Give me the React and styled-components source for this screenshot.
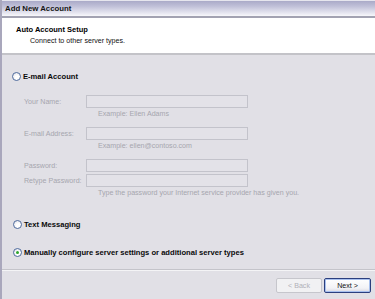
import React from "react";
import styled, { createGlobalStyle } from "styled-components";

const Global = createGlobalStyle`
  html, body { margin: 0; padding: 0; }
  body { width: 375px; height: 299px; overflow: hidden; background: #e1e0e6; }
  * { box-sizing: border-box; }
`;

const Window = styled.div`
  width: 375px;
  height: 299px;
  display: flex;
  flex-direction: column;
  border-left: 2px solid #a9a7bc;
  font-family: "Liberation Sans", Arial, sans-serif;
  font-size: 7.1px;
  color: #000;
  background: #e1e0e6;
`;

const TitleBar = styled.div`
  height: 18px;
  display: flex;
  align-items: center;
  padding: 0 0 1px 3px;
  border-top: 1px solid #e6e6ee;
  border-bottom: 2px solid #a3a3b2;
  background: linear-gradient(to bottom, #aaaac8 0%, #c0c0d8 35%, #efeff6 90%, #f8f8fb 100%);
  font-weight: bold;
  font-size: 7.8px;
  color: #141414;
`;

const Header = styled.div`
  height: 37px;
  background: #ffffff;
  border-bottom: 2px solid #c3c3c8;
  padding: 7px 0 0 14px;
  display: flex;
  flex-direction: column;
`;

const HeaderTitle = styled.div`
  font-weight: bold;
  font-size: 7.5px;
  line-height: 10px;
`;

const HeaderSub = styled.div`
  font-size: 7.1px;
  line-height: 10px;
  margin-top: 1px;
  padding-left: 14px;
  color: #111;
`;

const Body = styled.div`
  flex: 1;
  display: flex;
  flex-direction: column;
  padding-top: 15px;
  border-bottom: 1px solid #c4c4ca;
`;

const OptionRow = styled.label`
  height: 12px;
  display: flex;
  align-items: center;
  gap: 2px;
  padding-left: ${(p) => p.$indent}px;
  margin-top: ${(p) => p.$top}px;
  font-weight: bold;
  font-size: 7.6px;
  color: #0a0a0a;
`;

const Radio = styled.span`
  width: 9px;
  height: 9px;
  border-radius: 50%;
  border: 1px solid #4f6c9e;
  background: radial-gradient(circle at 60% 65%, #ffffff 30%, #dcdce4 100%);
  display: flex;
  align-items: center;
  justify-content: center;
  flex: none;
  &::after {
    content: "";
    display: ${(p) => (p.$checked ? "block" : "none")};
    width: 3px;
    height: 3px;
    border-radius: 50%;
    background: #2da52d;
  }
`;

const FieldRow = styled.div`
  height: 13px;
  display: grid;
  grid-template-columns: 62px 162px;
  align-items: center;
  padding-left: 22px;
  margin-top: ${(p) => p.$top}px;
`;

const FieldLabel = styled.span`
  color: #a6a6ae;
  padding-top: 1px;
`;

const Input = styled.div`
  height: 13px;
  border: 1px solid #c3c3cb;
  background: #e3e2e8;
`;

const Hint = styled.div`
  height: 12px;
  display: flex;
  align-items: center;
  padding-left: 96px;
  color: #a6a6ae;
`;

const Footer = styled.div`
  height: 29px;
  border-top: 1px solid #f4f4f6;
  display: flex;
  justify-content: flex-end;
  align-items: flex-start;
  gap: 2px;
  padding: 7px 4px 0 0;
`;

const Button = styled.button`
  width: ${(p) => p.$w}px;
  height: 15px;
  padding: 0;
  font-family: "Liberation Sans", Arial, sans-serif;
  font-size: 7.1px;
  border-radius: 2px;
  border: 1px solid ${(p) => (p.$primary ? "#2b3f7e" : "#c6c6cc")};
  color: ${(p) => (p.$primary ? "#111" : "#b0b0b8")};
  background: ${(p) =>
    p.$primary
      ? "linear-gradient(to bottom, #ffffff 0%, #f2f2f6 70%, #d8d8e2 100%)"
      : "#f1f1f3"};
  box-shadow: ${(p) => (p.$primary ? "inset 0 0 0 1px #a8c0ee" : "none")};
`;

export default function App() {
  return (
    <>
      <Global />
      <Window>
        <TitleBar>Add New Account</TitleBar>
        <Header>
          <HeaderTitle>Auto Account Setup</HeaderTitle>
          <HeaderSub>Connect to other server types.</HeaderSub>
        </Header>
        <Body>
          <OptionRow $indent={10} $top={0}>
            <Radio />
            E-mail Account
          </OptionRow>
          <FieldRow $top={13}>
            <FieldLabel>Your Name:</FieldLabel>
            <Input />
          </FieldRow>
          <Hint>Example: Ellen Adams</Hint>
          <FieldRow $top={7}>
            <FieldLabel>E-mail Address:</FieldLabel>
            <Input />
          </FieldRow>
          <Hint>Example: ellen@contoso.com</Hint>
          <FieldRow $top={7}>
            <FieldLabel>Password:</FieldLabel>
            <Input />
          </FieldRow>
          <FieldRow $top={2}>
            <FieldLabel>Retype Password:</FieldLabel>
            <Input />
          </FieldRow>
          <Hint>Type the password your Internet service provider has given you.</Hint>
          <OptionRow $indent={11} $top={19}>
            <Radio />
            Text Messaging
          </OptionRow>
          <OptionRow $indent={11} $top={16}>
            <Radio $checked />
            Manually configure server settings or additional server types
          </OptionRow>
        </Body>
        <Footer>
          <Button $w={46} disabled>&lt; Back</Button>
          <Button $w={47} $primary>Next &gt;</Button>
        </Footer>
      </Window>
    </>
  );
}
